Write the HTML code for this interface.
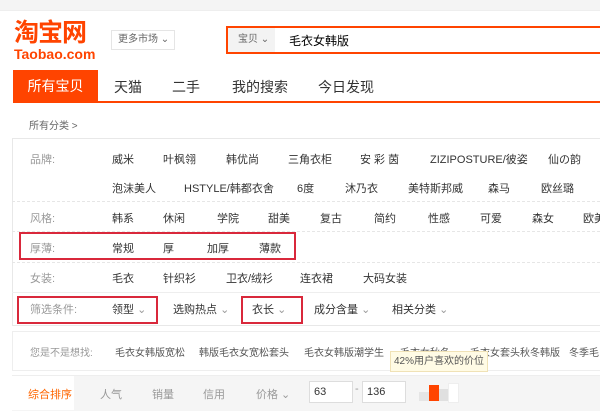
<!DOCTYPE html><html><head><meta charset="utf-8"><style>
body{margin:0;width:600px;height:410px;overflow:hidden;background:#fff;font-family:"Liberation Sans","Noto Sans CJK SC",sans-serif;font-size:11px;color:#333;position:relative}
.a{position:absolute;white-space:nowrap}
.g{color:#999}
.rb{position:absolute;border:2px solid #d9283b;box-sizing:border-box}
.dl{position:absolute;left:12px;width:588px;border-top:1px dashed #e6e6e6}
</style></head><body>
<div class="a" style="left:0;top:0;width:600px;height:10px;background:#f4f4f4;border-bottom:1px solid #eee"></div>
<div class="a" style="left:14px;top:18px;font-size:25px;font-weight:bold;color:#f40;letter-spacing:-1px;line-height:30px">淘宝网</div>
<div class="a" style="left:14px;top:46px;font-size:14px;font-weight:bold;color:#f40">Taobao.com</div>
<div class="a" style="left:111px;top:30px;width:62px;height:18px;border:1px solid #e5e5e5;font-size:10px;color:#666;line-height:18px;text-indent:6px">更多市场 ⌄</div>
<div class="a" style="left:226px;top:26px;width:380px;height:28px;border:2px solid #f40;box-sizing:border-box;background:#fff"></div>
<div class="a" style="left:228px;top:28px;width:47px;height:24px;background:#f3f3f3;font-size:10px;color:#666;line-height:24px;text-indent:10px">宝贝 ⌄</div>
<div class="a" style="left:289px;top:32px;font-size:12px;color:#000">毛衣女韩版</div>
<div class="a" style="left:13px;top:70px;width:587px;height:31px;border-bottom:2px solid #f40"></div>
<div class="a" style="left:13px;top:70px;width:85px;height:33px;background:#f40;color:#fff;font-size:14px;line-height:33px;text-align:center">所有宝贝</div>
<div class="a" style="left:114px;top:77px;font-size:14px;color:#333">天猫</div>
<div class="a" style="left:172px;top:77px;font-size:14px">二手</div>
<div class="a" style="left:232px;top:77px;font-size:14px">我的搜索</div>
<div class="a" style="left:318px;top:77px;font-size:14px">今日发现</div>
<div class="a" style="left:29px;top:117px;font-size:10px;color:#666">所有分类 &gt;</div>
<div class="a" style="left:12px;top:138px;width:600px;height:186px;border:1px solid #e8e8e8;border-right:none"></div>
<div class="a g" style="left:30px;top:151px">品牌:</div>
<div class="a" style="left:112px;top:151px">威米</div><div class="a" style="left:163px;top:151px">叶枫翎</div><div class="a" style="left:226px;top:151px">韩优尚</div><div class="a" style="left:288px;top:151px">三角衣柜</div><div class="a" style="left:360px;top:151px">安 彩 茵</div><div class="a" style="left:430px;top:151px">ZIZIPOSTURE/彼姿</div><div class="a" style="left:548px;top:151px">仙の韵</div>
<div class="a" style="left:112px;top:180px">泡沫美人</div><div class="a" style="left:184px;top:180px">HSTYLE/韩都衣舍</div><div class="a" style="left:297px;top:180px">6度</div><div class="a" style="left:345px;top:180px">沐乃衣</div><div class="a" style="left:408px;top:180px">美特斯邦威</div><div class="a" style="left:488px;top:180px">森马</div><div class="a" style="left:541px;top:180px">欧丝璐</div>
<div class="dl" style="top:201px"></div>
<div class="a g" style="left:30px;top:210px">风格:</div>
<div class="a" style="left:112px;top:210px">韩系</div><div class="a" style="left:163px;top:210px">休闲</div><div class="a" style="left:217px;top:210px">学院</div><div class="a" style="left:268px;top:210px">甜美</div><div class="a" style="left:320px;top:210px">复古</div><div class="a" style="left:374px;top:210px">简约</div><div class="a" style="left:428px;top:210px">性感</div><div class="a" style="left:480px;top:210px">可爱</div><div class="a" style="left:532px;top:210px">森女</div><div class="a" style="left:583px;top:210px">欧美</div>
<div class="dl" style="top:231px"></div>
<div class="a g" style="left:30px;top:240px">厚薄:</div>
<div class="a" style="left:112px;top:240px">常规</div><div class="a" style="left:163px;top:240px">厚</div><div class="a" style="left:207px;top:240px">加厚</div><div class="a" style="left:259px;top:240px">薄款</div>
<div class="rb" style="left:19px;top:232px;width:277px;height:28px"></div>
<div class="dl" style="top:262px"></div>
<div class="a g" style="left:30px;top:270px">女装:</div>
<div class="a" style="left:112px;top:270px">毛衣</div><div class="a" style="left:163px;top:270px">针织衫</div><div class="a" style="left:226px;top:270px">卫衣/绒衫</div><div class="a" style="left:300px;top:270px">连衣裙</div><div class="a" style="left:363px;top:270px">大码女装</div>
<div class="a" style="left:12px;top:292px;width:588px;border-top:1px solid #eee"></div>
<div class="a g" style="left:30px;top:301px">筛选条件:</div>
<div class="a" style="left:112px;top:301px">领型 <span class="g">⌄</span></div><div class="a" style="left:173px;top:301px">选购热点 <span class="g">⌄</span></div><div class="a" style="left:252px;top:301px">衣长 <span class="g">⌄</span></div><div class="a" style="left:314px;top:301px">成分含量 <span class="g">⌄</span></div><div class="a" style="left:392px;top:301px">相关分类 <span class="g">⌄</span></div>
<div class="rb" style="left:17px;top:296px;width:141px;height:28px"></div>
<div class="rb" style="left:241px;top:296px;width:62px;height:28px"></div>
<div class="a" style="left:12px;top:331px;width:600px;height:38px;border:1px solid #eee;border-right:none"></div>
<div class="a g" style="left:30px;top:344px;font-size:10px">您是不是想找:</div>
<div class="a" style="left:115px;top:344px;color:#555;font-size:10px">毛衣女韩版宽松</div><div class="a" style="left:199px;top:344px;color:#555;font-size:10px">韩版毛衣女宽松套头</div><div class="a" style="left:304px;top:344px;color:#555;font-size:10px">毛衣女韩版潮学生</div><div class="a" style="left:400px;top:344px;color:#555;font-size:10px">毛衣女秋冬</div><div class="a" style="left:470px;top:344px;color:#555;font-size:10px">毛衣女套头秋冬韩版</div><div class="a" style="left:569px;top:344px;color:#555;font-size:10px">冬季毛</div>
<div class="a" style="left:390px;top:351px;width:96px;height:19px;background:#fffbe5;border:1px solid #f0e2b6;font-size:10px;line-height:19px;text-align:center;color:#555">42%用户喜欢的价位</div>
<div class="a" style="left:12px;top:375px;width:600px;height:35px;background:#f5f5f5;border-top:1px solid #eee"></div>
<div class="a" style="left:12px;top:376px;width:62px;height:34px;background:#fff"></div>
<div class="a" style="left:28px;top:386px;color:#f60">综合排序</div>
<div class="a g" style="left:100px;top:386px">人气</div><div class="a g" style="left:152px;top:386px">销量</div><div class="a g" style="left:203px;top:386px">信用</div><div class="a g" style="left:256px;top:386px">价格 ⌄</div>
<div class="a" style="left:309px;top:381px;width:42px;height:20px;border:1px solid #ddd;background:#fff;line-height:20px;text-indent:4px">63</div>
<div class="a g" style="left:355px;top:383px">-</div>
<div class="a" style="left:362px;top:381px;width:42px;height:20px;border:1px solid #ddd;background:#fff;line-height:20px;text-indent:4px">136</div>
<div class="a" style="left:419px;top:392px;width:10px;height:9px;background:#e5e5e5"></div>
<div class="a" style="left:429px;top:385px;width:10px;height:16px;background:#f40"></div>
<div class="a" style="left:439px;top:389px;width:9px;height:12px;background:#e0e0e0"></div>
<div class="a" style="left:448px;top:383px;width:9px;height:18px;background:#fff;border:1px solid #eee"></div>
</body></html>
